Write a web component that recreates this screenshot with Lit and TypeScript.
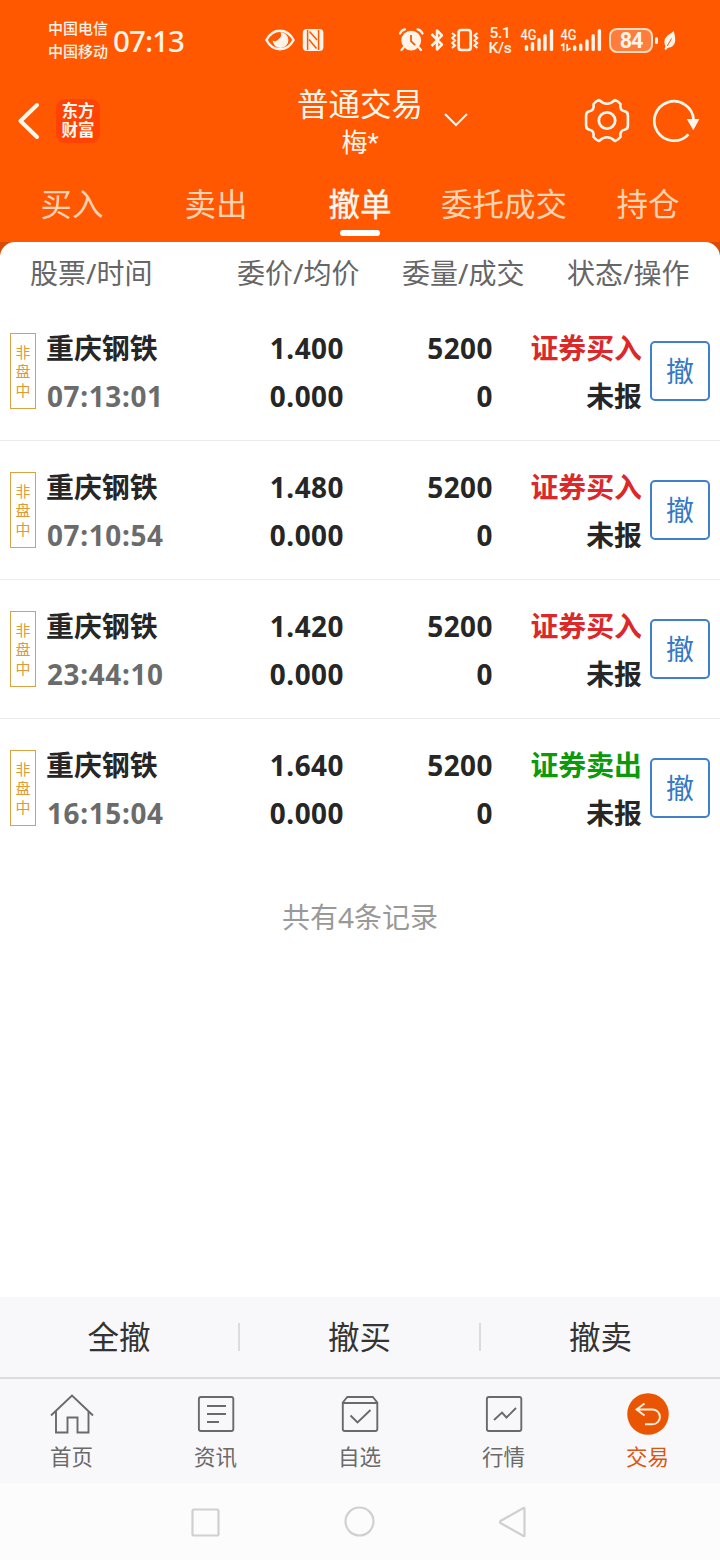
import { LitElement, html, css, svg } from "lit";
import { customElement } from "lit/decorators.js";
import { classMap } from "lit/directives/class-map.js";

interface Order {
  name: string;
  time: string;
  price: string;
  avg: string;
  qty: string;
  done: string;
  side: string;
  sell: boolean;
}

const order = (time: string, price: string, side = "证券买入"): Order => ({
  name: "重庆钢铁",
  time,
  price,
  avg: "0.000",
  qty: "5200",
  done: "0",
  side,
  sell: side === "证券卖出",
});

const ORDERS: Order[] = [
  order("07:13:01", "1.400"),
  order("07:10:54", "1.480"),
  order("23:44:10", "1.420"),
  order("16:15:04", "1.640", "证券卖出"),
];

const TABS = ["买入", "卖出", "撤单", "委托成交", "持仓"];

const NAV = [
  {
    label: "首页",
    icon: svg`<path d="M1 21.5 22 1.5 43 21.5M6 17.5V38.5H17.5V23.5H27.5V38.5H38.5V17.5"/>`,
  },
  {
    label: "资讯",
    icon: svg`<rect x="4.9" y="3" width="34.4" height="34" rx="2"/><path d="M13 12H32M13 20H32M13 28H25"/>`,
  },
  {
    label: "自选",
    icon: svg`<path d="M4.8 8.5 9.3 3H34.8L39.3 8.5V35Q39.3 37 37.3 37H6.8Q4.8 37 4.8 35ZM5 9H39M12.5 21.5 19.5 28.5 32.5 16"/>`,
  },
  {
    label: "行情",
    icon: svg`<rect x="4.9" y="3" width="34.4" height="34" rx="2"/><path d="M12 26 20 18.5 24.5 23.5 34 14"/>`,
  },
  {
    label: "交易",
    icon: svg`<circle class="disc" cx="22" cy="20" r="20.8"/><path class="turn" d="M18.5 9.5 10.5 15.5 18.5 21.5M11 15.5H26.5A7.3 7.3 0 0 1 26.5 30.3H19"/>`,
  },
];

@customElement("status-bar")
class StatusBar extends LitElement {
  static styles = css`
    :host {
      display: flex;
      height: 80px;
      padding-left: 48px;
      box-sizing: border-box;
      align-items: center;
      color: #fff4ea;
      font-family: "Noto Sans", "Noto Sans CJK SC", sans-serif;
    }
    svg {
      display: block;
      flex: none;
      fill: none;
      stroke: currentColor;
    }
    .carrier {
      width: 65px;
      font-size: 15px;
      line-height: 23px;
      font-weight: 500;
      white-space: nowrap;
    }
    .clock {
      width: 152px;
      font-size: 29.5px;
      line-height: 40px;
      font-weight: 500;
      letter-spacing: -0.9px;
      padding-top: 1px;
    }
    .nfc {
      margin-left: 7px;
      margin-right: 75px;
    }
    .bt {
      margin-left: 6px;
      margin-right: 7px;
    }
    .speed {
      flex: none;
      width: 26px;
      margin: 1px 7px 0 8px;
      font: 500 15.5px/15px Roboto, sans-serif;
      text-align: center;
      letter-spacing: -0.3px;
    }
    .signal {
      margin-right: 6px;
    }
    .signal.second {
      margin-right: 7px;
    }
    .signal text {
      font: 500 15.5px Roboto, sans-serif;
      fill: currentColor;
      stroke: none;
    }
    .battery {
      flex: none;
      width: 44px;
      height: 25px;
      box-sizing: border-box;
      border: 2px solid #ffdcc0;
      border-radius: 8px;
      background: #ff7d3c;
      font: 700 21.5px/22px Roboto, sans-serif;
      letter-spacing: -1px;
      text-align: center;
    }
    .cap {
      width: 3px;
      height: 7px;
      border-radius: 2px;
      background: currentColor;
      margin: 0 5px 0 2px;
    }
  `;

  render() {
    return html`
      <div class="carrier"><div>中国电信</div><div>中国移动</div></div>
      <div class="clock">07:13</div>
      <svg width="30" height="24" viewBox="0 0 30 24">
        <path d="M1.4 12C8-0.4 22-0.4 28.6 12 22 24.4 8 24.4 1.4 12Z" stroke-width="2.5" />
        <path d="M15.5 4.2A7.9 7.9 0 1 1 7.6 12.5 4.3 4.3 0 0 0 13.6 11 5 5 0 0 0 15.5 4.2Z" fill="currentColor" stroke="none" />
      </svg>
      <svg class="nfc" width="22" height="24" viewBox="0 0 22 24">
        <rect x="0.8" y="1" width="20.6" height="22" rx="4" fill="currentColor" stroke="none" />
        <path d="M5.6 2V22M16.6 2V22M7.5 3.5 15 12M7 11.5 14.5 20.5" stroke="#ff5800" stroke-width="1.5" />
      </svg>
      <svg width="25" height="24" viewBox="0 0 25 24">
        <circle cx="12.2" cy="12.6" r="9.9" fill="currentColor" stroke="none" />
        <path d="M1 5.5Q2.5 2 6 1.3M18.5 1.3Q22 2 23.5 5.5M5 19 2.5 22M19.5 19 22 22" stroke-width="2.2" stroke-linecap="round" />
        <path d="M12 7V13.2L16.2 17.2" stroke="#ff5800" stroke-width="1.8" />
      </svg>
      <svg class="bt" width="14" height="24" viewBox="0 0 14 24">
        <path d="M1.5 6 12 16.7 7 21.5V2.5L12 7.3 1.5 18" stroke-width="2.5" stroke-linejoin="round" />
      </svg>
      <svg width="28" height="24" viewBox="0 0 28 24">
        <rect x="7.7" y="2" width="12" height="20" rx="2.5" stroke-width="2.7" />
        <path d="M1 5 4 7.5 1.3 10 4 12.5 1.3 15 4 17.5 1 20M26.5 5 23.5 7.5 26.2 10 23.5 12.5 26.2 15 23.5 17.5 26.5 20" stroke-width="2.1" />
      </svg>
      <div class="speed"><div>5.1</div><div>K/s</div></div>
      <svg class="signal" width="34" height="26" viewBox="0 0 34 26">
        <text x="0.5" y="13" textLength="16" lengthAdjust="spacingAndGlyphs">4G</text>
        <path d="M6.5 19.6V22.4M12.5 16.6V22.4M19 12.8V22.4M25 8.8V22.4M31.5 3.6V22.4" stroke-width="3.4" stroke-linecap="round" />
      </svg>
      <svg class="signal second" width="42" height="26" viewBox="0 0 42 26">
        <text x="0.5" y="13" textLength="16" lengthAdjust="spacingAndGlyphs">4G</text>
        <path d="M1 18.8 3.6 17V24M10.5 21.2 7.2 23.2V17" stroke-width="1.7" />
        <path d="M14.7 19.9V22.4M20.7 18.3V22.4M27 14V22.4M33.2 8.8V22.4M39.4 3.6V22.4" stroke-width="3.4" stroke-linecap="round" />
      </svg>
      <div class="battery">84</div>
      <div class="cap"></div>
      <svg width="13" height="22" viewBox="0 0 13 22">
        <path d="M10.8 2C11.3 5 12.6 8 12.1 12.5Q11 18.5 5 18.8L2.8 21 1.5 20 2.5 17.5Q-0.5 11 4.5 6.5 8 4.5 10.8 2Z" fill="currentColor" stroke="none" />
        <path d="M4.3 17 8.5 9.5" stroke="#ff5800" stroke-width="1" />
      </svg>
    `;
  }
}

@customElement("order-row")
class OrderRow extends LitElement {
  static properties = { order: { attribute: false } };
  declare order: Order;

  static styles = css`
    :host {
      display: grid;
      grid-template-columns: 26px 164px 144px 149px 149px 68px;
      height: 139px;
      padding: 22px 10px 0;
      box-sizing: border-box;
      font: 700 27.9px/48px "Noto Sans", "Noto Sans CJK SC", sans-serif;
      color: #262626;
      border-bottom: 1px solid #ececec;
      white-space: nowrap;
    }
    :host([last]) {
      border-color: transparent;
    }
    .tag {
      height: 76px;
      margin-top: 9px;
      padding-top: 9px;
      box-sizing: border-box;
      border: 1px solid #d9a242;
      color: #dd9a35;
      font-size: 15px;
      font-weight: 400;
      line-height: 19px;
      text-align: center;
      white-space: normal;
    }
    .stock {
      padding-left: 10px;
    }
    .time {
      padding-left: 1px;
      color: #6b6b6b;
      letter-spacing: 0.65px;
    }
    .num {
      text-align: right;
      letter-spacing: 0.5px;
    }
    .state {
      text-align: right;
    }
    .side {
      color: #dc2828;
    }
    .side.sell {
      color: #0a9a0a;
    }
    .cancel {
      width: 60px;
      height: 60px;
      margin: 17px 0 0 8px;
      padding: 0;
      border: 2px solid #3f80cb;
      border-radius: 5px;
      background: #fff;
      color: #3478c6;
      font: 400 28px/56px "Noto Sans", "Noto Sans CJK SC", sans-serif;
    }
  `;

  render() {
    const o = this.order;
    return html`
      <div class="tag">非盘中</div>
      <div class="stock"><div>${o.name}</div><div class="time">${o.time}</div></div>
      <div class="num"><div>${o.price}</div><div>${o.avg}</div></div>
      <div class="num"><div>${o.qty}</div><div>${o.done}</div></div>
      <div class="state">
        <div class=${classMap({ side: true, sell: o.sell })}>${o.side}</div>
        <div>未报</div>
      </div>
      <button class="cancel">撤</button>
    `;
  }
}

@customElement("app-root")
class AppRoot extends LitElement {
  static styles = css`
    :host {
      display: flex;
      flex-direction: column;
      width: 720px;
      height: 1560px;
      overflow: hidden;
      background: #fff;
      font-family: "Noto Sans", "Noto Sans CJK SC", sans-serif;
      white-space: nowrap;
    }
    svg {
      display: block;
      flex: none;
      fill: none;
      stroke: currentColor;
    }
    .top {
      background: linear-gradient(#ff5800 242px, #d94b08 242px);
      color: #fff6ee;
    }
    .bar {
      display: grid;
      grid-template-columns: 1fr 128px 1fr;
      height: 86px;
    }
    .left {
      display: flex;
      align-items: flex-start;
      padding: 19px 0 0 17px;
    }
    .logo {
      width: 44px;
      height: 44px;
      margin-left: 16px;
      padding-top: 3px;
      box-sizing: border-box;
      border-radius: 9px;
      background: #ff4305;
      font: 700 16.5px/19px "Liberation Sans", "Noto Sans CJK SC", sans-serif;
      text-align: center;
    }
    .back {
      margin-top: 3px;
    }
    .heading {
      text-align: center;
    }
    .title {
      font-size: 31.5px;
      line-height: 40px;
      padding-top: 4px;
    }
    .user {
      padding-top: 1px;
      font-family: Roboto, "Noto Sans CJK SC", sans-serif;
      font-size: 26px;
      line-height: 36px;
    }
    .right {
      display: flex;
      align-items: flex-start;
      padding: 18px 0 0 20px;
    }
    .drop {
      margin: 14px 116px 0 0;
    }
    .gear {
      margin-right: 23px;
    }
    .tabs {
      display: grid;
      grid-template-columns: repeat(5, 144px);
      height: 76px;
      font-size: 31.5px;
      line-height: 76px;
      text-align: center;
      color: #ffd3b4;
    }
    .tab.on {
      display: flex;
      flex-direction: column;
      align-items: center;
      color: #fff8f0;
      -webkit-text-stroke: 0.4px #fff8f0;
    }
    .tab.on::after {
      content: "";
      width: 40px;
      height: 6px;
      margin-top: -12px;
      border-radius: 3px;
      background: #fff;
    }
    .cols {
      display: grid;
      grid-template-columns: 207px 165px 165px 1fr;
      height: 60px;
      padding-left: 30px;
      border-radius: 15px 15px 0 0;
      background: #fff;
      color: #666;
      font-size: 28px;
      line-height: 62px;
    }
    .total {
      margin-top: 37px;
      text-align: center;
      font-size: 28px;
      line-height: 44px;
      color: #999;
    }
    .actions {
      display: grid;
      grid-template-columns: 238px 241px 241px;
      align-items: center;
      height: 80px;
      margin-top: auto;
      background: #f8f8fa;
      border-bottom: 2px solid #dcdcde;
      text-align: center;
      font-size: 31.5px;
      line-height: 28px;
      color: #333;
    }
    .action + .action {
      border-left: 2px solid #dcdcde;
    }
    .nav {
      display: grid;
      grid-template-columns: repeat(5, 144px);
      height: 104px;
      background: #f8f8fa;
      color: #6a6a6a;
    }
    .item {
      display: flex;
      flex-direction: column;
      align-items: center;
      padding-top: 14px;
      font-size: 21.5px;
      line-height: 30px;
      gap: 7px;
    }
    .item div {
      margin-right: 1px;
    }
    .item svg {
      stroke-width: 1.9;
      overflow: visible;
    }
    .item.on {
      color: #dc5510;
    }
    .disc {
      fill: #ea5504;
      stroke: none;
    }
    .turn {
      stroke: #fff0e0;
    }
    .system {
      display: flex;
      align-items: center;
      justify-content: center;
      gap: 123px;
      height: 77px;
      padding-right: 2px;
      box-sizing: border-box;
      background: #fcfcfc;
      color: #d0d0d0;
    }
    .system svg {
      stroke-width: 2.2;
    }
  `;

  render() {
    return html`
      <header class="top">
        <status-bar></status-bar>
        <div class="bar">
          <div class="left">
            <svg class="back" width="23" height="38" viewBox="0 0 23 38">
              <path d="M20 3 3.5 19 20 35" stroke-width="4" stroke-linecap="round" stroke-linejoin="round" />
            </svg>
            <div class="logo"><div>东方</div><div>财富</div></div>
          </div>
          <div class="heading">
            <div class="title">普通交易</div>
            <div class="user">梅*</div>
          </div>
          <div class="right">
            <svg class="drop" width="24" height="16" viewBox="0 0 24 16">
              <path d="M1 2 12 13 23 2" stroke-width="2" />
            </svg>
            <svg class="gear" width="46" height="46" viewBox="-23 -22.5 46 46">
              <circle r="8.2" stroke-width="2.8" />
              <path d="M-8-20.5Q-11-19.5-13.5-16.5-12.5-10-17.5-9.2-21-8.5-20.9-5V5Q-21 8.5-17.5 9.2-12.5 10-13.5 16.5-11 19.5-8 20.5-4 16.8 0 16.8 4 16.8 8 20.5 11 19.5 13.5 16.5 12.5 10 17.5 9.2 21 8.5 20.9 5V-5Q21-8.5 17.5-9.2 12.5-10 13.5-16.5 11-19.5 8-20.5 4-16.8 0-16.8-4-16.8-8-20.5Z" stroke-width="2.6" stroke-linejoin="round" />
            </svg>
            <svg width="50" height="46" viewBox="0 0 50 46">
              <path d="M35.5 36.3A19.7 19.7 0 1 1 40.6 21.5" stroke-width="2.7" />
              <path d="M33.8 21H46.4L40.3 32.3Z" fill="currentColor" stroke="none" />
            </svg>
          </div>
        </div>
        <nav class="tabs">
          ${TABS.map((t) => html`<div class=${classMap({ tab: true, on: t === "撤单" })}>${t}</div>`)}
        </nav>
        <div class="cols">
          <div>股票/时间</div>
          <div>委价/均价</div>
          <div>委量/成交</div>
          <div>状态/操作</div>
        </div>
      </header>
      ${ORDERS.map((o, i) => html`<order-row .order=${o} ?last=${i === ORDERS.length - 1}></order-row>`)}
      <div class="total">共有${ORDERS.length}条记录</div>
      <div class="actions">
        <div class="action">全撤</div>
        <div class="action">撤买</div>
        <div class="action">撤卖</div>
      </div>
      <nav class="nav">
        ${NAV.map(
          (n) => html`<div class=${classMap({ item: true, on: n.label === "交易" })}>
            <svg width="44" height="42" viewBox="0 -1 44 42">${n.icon}</svg>
            <div>${n.label}</div>
          </div>`,
        )}
      </nav>
      <div class="system">
        <svg width="30" height="32" viewBox="0 0 30 32"><rect x="2.5" y="3.5" width="26" height="26" rx="1.5" /></svg>
        <svg width="32" height="32" viewBox="0 0 32 32"><circle cx="16.5" cy="15.5" r="14" /></svg>
        <svg width="30" height="32" viewBox="0 0 30 32"><path d="M26.5 2.5V29.5Q26.5 30.5 25.5 30L2.5 17Q1.5 16 2.5 15L25.5 2Q26.5 1.5 26.5 2.5Z" /></svg>
      </div>
    `;
  }
}
